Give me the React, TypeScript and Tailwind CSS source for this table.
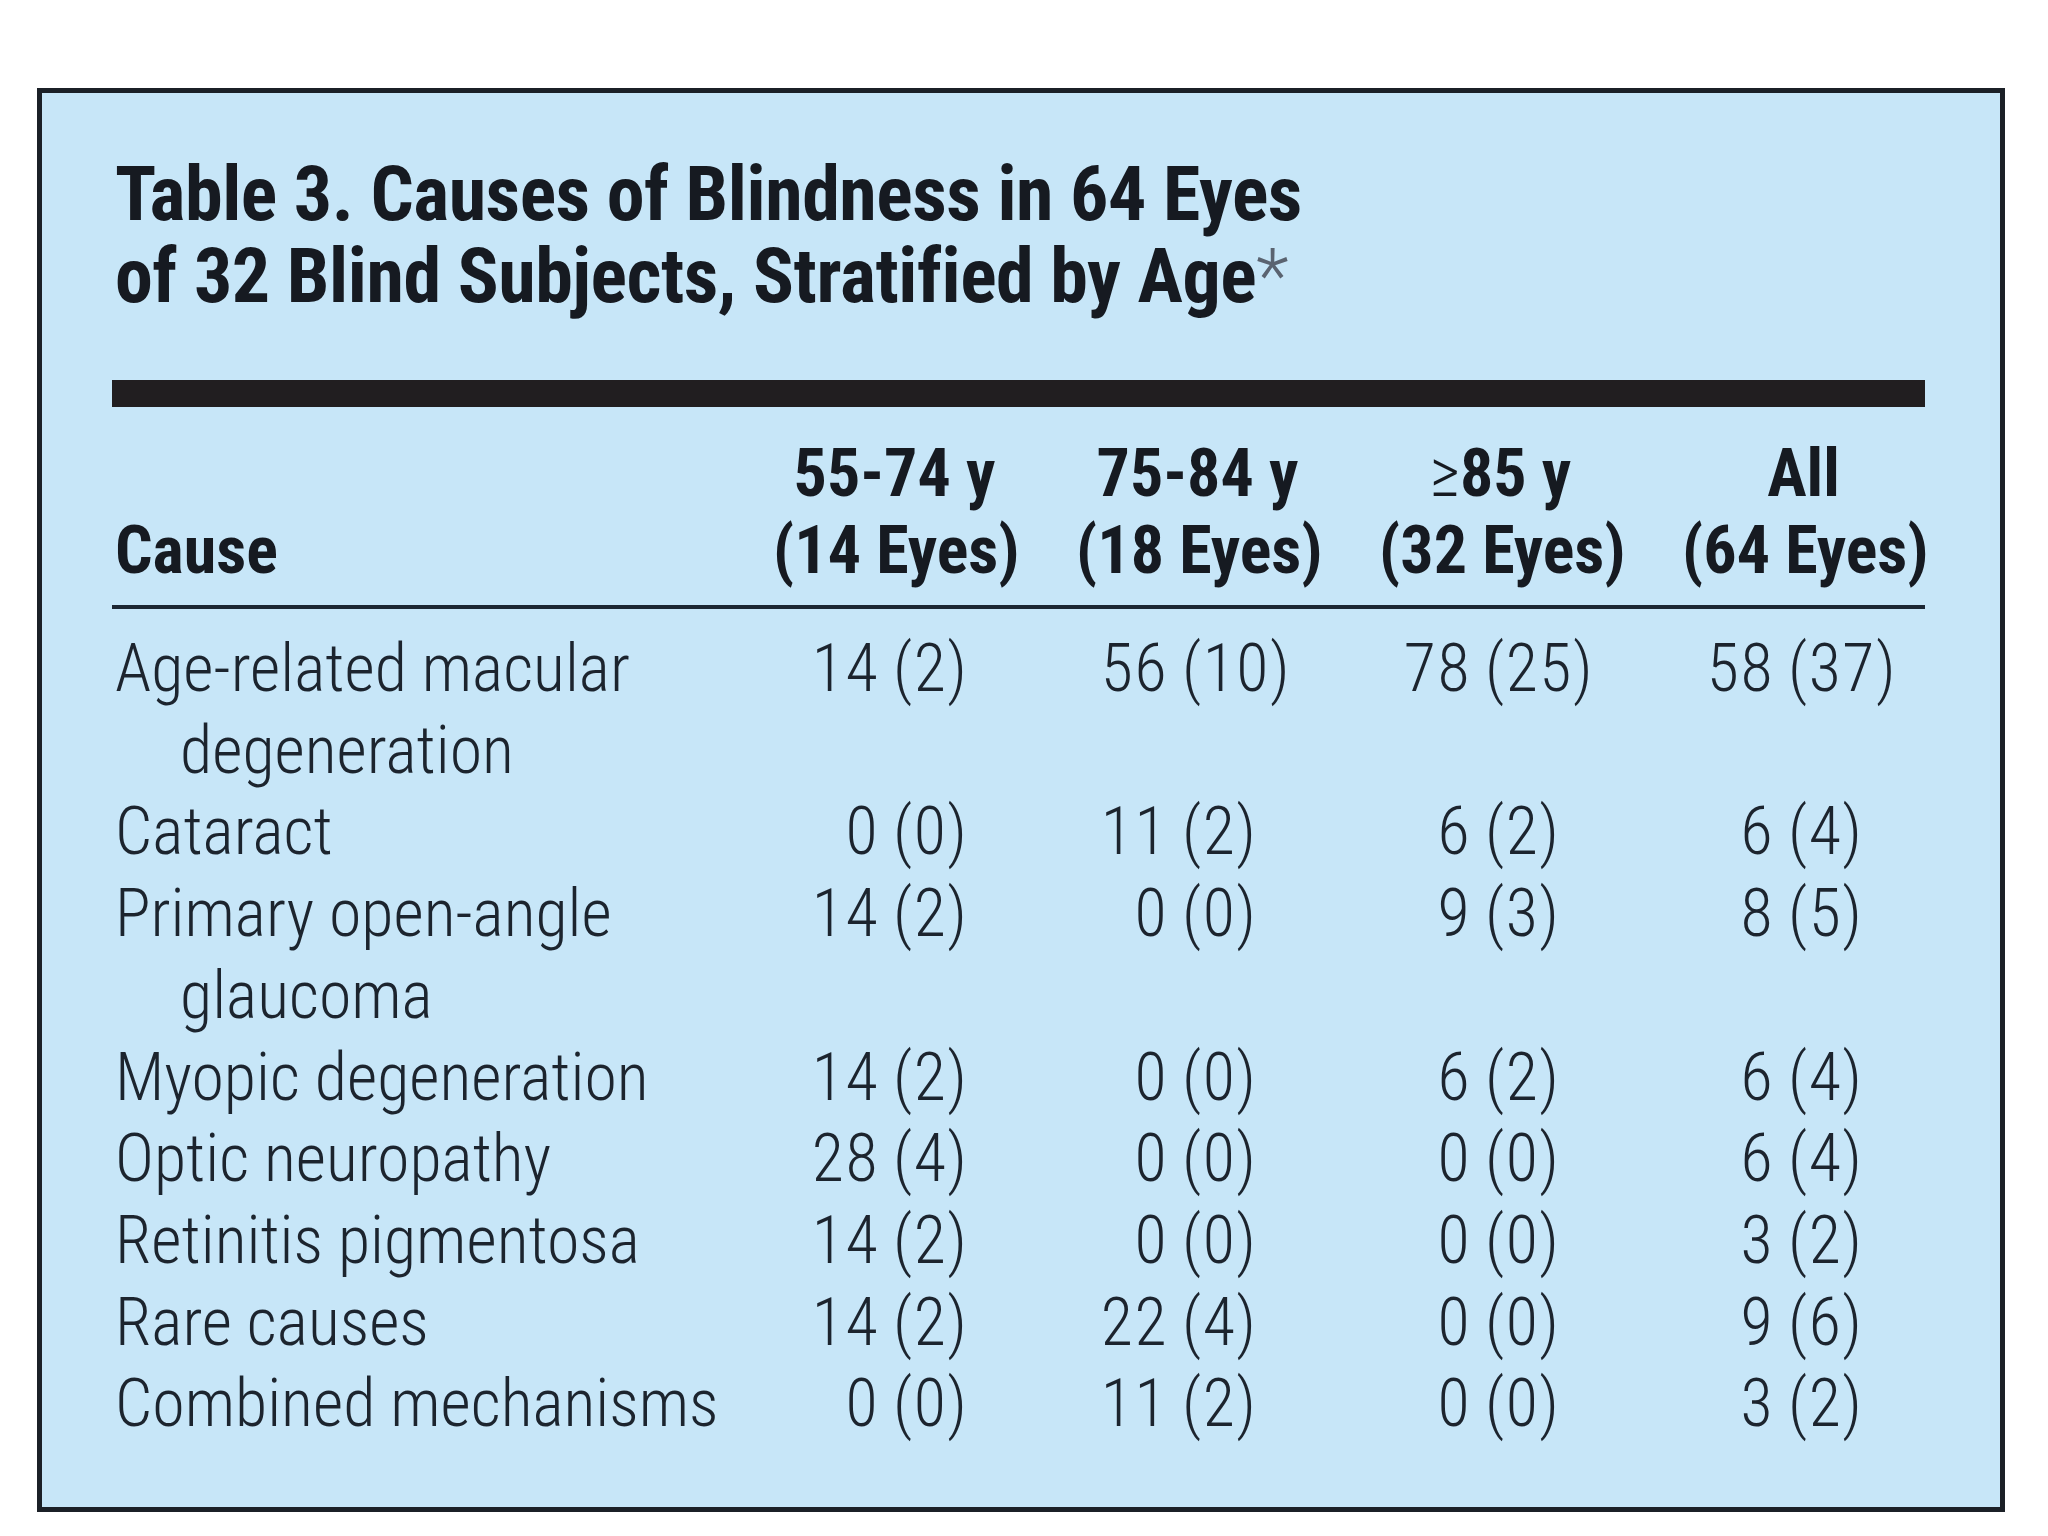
import React from "react";

type Row = { cause: string[]; values: [number, number][] };

const rows: Row[] = [
  { cause: ["Age-related macular", "degeneration"], values: [[14, 2], [56, 10], [78, 25], [58, 37]] },
  { cause: ["Cataract"], values: [[0, 0], [11, 2], [6, 2], [6, 4]] },
  { cause: ["Primary open-angle", "glaucoma"], values: [[14, 2], [0, 0], [9, 3], [8, 5]] },
  { cause: ["Myopic degeneration"], values: [[14, 2], [0, 0], [6, 2], [6, 4]] },
  { cause: ["Optic neuropathy"], values: [[28, 4], [0, 0], [0, 0], [6, 4]] },
  { cause: ["Retinitis pigmentosa"], values: [[14, 2], [0, 0], [0, 0], [3, 2]] },
  { cause: ["Rare causes"], values: [[14, 2], [22, 4], [0, 0], [9, 6]] },
  { cause: ["Combined mechanisms"], values: [[0, 0], [11, 2], [0, 0], [3, 2]] },
];

const headers = [
  { top: "55-74 y", bottom: "(14 Eyes)" },
  { top: "75-84 y", bottom: "(18 Eyes)" },
  { top: "85 y", bottom: "(32 Eyes)", ge: true },
  { top: "All", bottom: "(64 Eyes)" },
];

const cols = "grid grid-cols-[minmax(0,1fr)_243px_243px_243px_243px] gap-x-[60px]";

function Cell({ value, first }: { value: [number, number]; first: boolean }) {
  return (
    <div className={`grid tracking-[1.5px] ${first ? "grid-cols-[120px_1fr]" : "grid-cols-[106px_1fr]"}`}>
      <span className="text-right pr-[14px]">{value[0]}</span>
      <span className="text-left">({value[1]})</span>
    </div>
  );
}

export default function App() {
  return (
    <div className="min-h-[1536px] w-[2048px] bg-white pt-[88px] pl-[37px] font-['Roboto_Condensed','Roboto',sans-serif]">
      <div className="w-[1968px] h-[1424px] border-[5px] border-[#1b2027] bg-[#c7e6f8] pl-[70px] pr-[75px] pt-[60px]">
        <h2 className="pl-[3px] text-[76px] leading-[82px] tracking-[-0.45px] font-bold text-[#161a21] whitespace-nowrap">
          Table 3. Causes of Blindness in 64 Eyes
          <br />
          of 32 Blind Subjects, Stratified by Age
          <span className="font-light text-[#5a6370]">*</span>
        </h2>

        <div className="mt-[63px] h-[27px] bg-[#211e20]" />

        <div className={`${cols} mt-[28px] pb-[16px] border-b-[4px] border-[#1c2733] text-[66px] leading-[77px] font-bold text-[#161a21]`}>
          <div className="self-end pl-[3px]">Cause</div>
          {headers.map((h) => (
            <div key={h.bottom} className="text-center whitespace-nowrap">
              <div>
                {h.ge && <span className="font-light">≥</span>}
                {h.top}
              </div>
              <div>{h.bottom}</div>
            </div>
          ))}
        </div>

        <div className="pt-[19px] text-[66px] leading-[81.7px] font-light text-[#1c242e]">
          {rows.map((row) => (
            <div key={row.cause[0]} className={cols}>
              <div className="pl-[3px] whitespace-nowrap">
                {row.cause.map((line, i) => (
                  <div key={line} className={i > 0 ? "pl-[65px]" : ""}>
                    {line}
                  </div>
                ))}
              </div>
              {row.values.map((v, i) => (
                <Cell key={i} value={v} first={i === 0} />
              ))}
            </div>
          ))}
        </div>
      </div>
    </div>
  );
}
